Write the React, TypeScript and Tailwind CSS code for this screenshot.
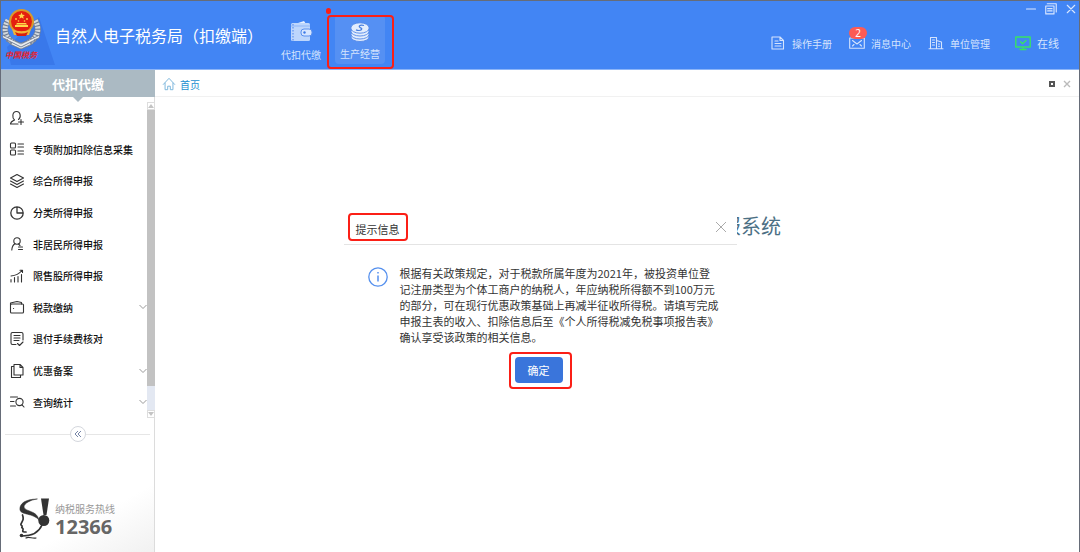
import type { ReactNode } from "react";

function Icon({ children, className = "", label }: { children: ReactNode; className?: string; label?: string }) {
  return (
    <svg
      viewBox="0 0 16 16"
      fill="none"
      stroke="currentColor"
      strokeWidth="1.1"
      strokeLinecap="round"
      strokeLinejoin="round"
      aria-hidden={label ? undefined : true}
      aria-label={label}
      className={`shrink-0 ${className}`}
    >
      {children}
    </svg>
  );
}

function Emblem() {
  return (
    <svg viewBox="0 0 56 60" className="h-[60px] w-14 shrink-0" role="img" aria-label="中国税务">
      <path d="M38 10 L54 58 H10 L6 40Z" fill="#3978ea" />
      <path d="M7 13 C1 23 4 34 20 39 C37 34 40 23 34 13" fill="none" stroke="#6f7d93" strokeWidth="6" />
      <path d="M7 13 C1 23 4 34 20 39 C37 34 40 23 34 13" fill="none" stroke="#d3d8dc" strokeWidth="5" strokeDasharray="2 1.2" />
      <path d="M1 28 L20 37 L39 28 L38 31 L33 33 L35 34 L29 36 L31 37 L20 42 L9 37 L11 36 L5 34 L7 33 L2 31Z" fill="#e9ecef" stroke="#67748c" strokeWidth=".7" />
      <path d="M6 33 L20 40 L34 33" fill="none" stroke="#67748c" strokeWidth=".9" />
      <circle cx="20.500" cy="14.500" r="12.500" fill="#d99a2b" />
      <circle cx="20.500" cy="14.500" r="10.500" fill="#e5200f" />
      <path d="M20.500 5.500l1 2.200 2.400.2-1.800 1.600.6 2.300-2.200-1.300-2.100 1.300.6-2.300-1.800-1.600 2.400-.2z" fill="#ffd94a" />
      <g fill="#ffd94a">
        <circle cx="15" cy="12" r=".9" />
        <circle cx="26" cy="12" r=".9" />
        <circle cx="17.500" cy="14" r=".8" />
        <circle cx="23.500" cy="14" r=".8" />
        <path d="M14 18 H27 V20 H14Z M16 16 H25 L26 17.500 H15Z" />
      </g>
      <path d="M11 22 C16 25 25 25 30 22 L28 28 H13Z" fill="#efb53a" />
      <path d="M14 25 Q20.500 28 27 25 L25 29 H16Z" fill="#d71e10" />
      <text x="4" y="51" fontSize="8" fontWeight="700" fontStyle="italic" fill="#e8222a" fontFamily="'Noto Sans CJK SC', sans-serif">
        中国税务
      </text>
    </svg>
  );
}

function WalletIcon() {
  return (
    <svg viewBox="0 0 24 22" className="h-[22px] w-6" aria-hidden>
      <path d="M6 3 L15 0 L17 3Z" fill="#e8f1ff" />
      <rect x="2" y="2" width="19" height="18" rx="1.500" fill="#bdd6fc" />
      <path d="M2 5 H21" stroke="#8db5f8" />
      <path d="M4 3 V20" stroke="#6f9ff2" strokeWidth="1.500" strokeDasharray="1.500 1.500" />
      <rect x="12" y="8" width="11" height="7" rx="3" fill="#d7e6ff" stroke="#5a90ee" />
      <circle cx="15.500" cy="11.500" r="1.200" fill="#3c7ae6" />
    </svg>
  );
}

function CoinsIcon() {
  return (
    <svg viewBox="0 0 20 20" className="h-5 w-5" aria-hidden>
      <g fill="#e3edfd" stroke="#5187e6" strokeWidth=".9">
        <ellipse cx="10" cy="15" rx="9" ry="4.500" />
        <ellipse cx="10" cy="12.500" rx="9" ry="4.500" />
        <ellipse cx="10" cy="9.500" rx="9" ry="4.500" />
        <ellipse cx="10" cy="6" rx="9.200" ry="5.200" />
      </g>
      <path d="M14 3.500 C11 2.500 8.500 3.500 9.500 5 C10 6 12.500 6 11.500 7.500 C10.500 8.800 7.500 8.500 6 7.800" fill="none" stroke="#4a80df" strokeWidth="1.300" />
    </svg>
  );
}

function HotlineLogo() {
  return (
    <svg viewBox="0 0 32 42" className="h-[42px] w-8 shrink-0" aria-hidden fill="none" stroke="#333" strokeLinecap="round">
      <path d="M18 1 C6 1 0 6 1 12 C2 17 14 15 20 22 C18 12 6 14 5 9 C5 5 12 2 18 1Z" fill="#333" strokeWidth=".5" />
      <path d="M22 .5 H30 L27.500 17 H24.500Z" fill="#333" stroke="none" />
      <circle cx="24.800" cy="22.500" r="5.500" fill="#333" stroke="none" />
      <path d="M23 27 C20 34 14 38 3 38" strokeWidth="1.700" />
      <circle cx="2.500" cy="37.500" r="1.800" fill="#333" stroke="none" />
      <path d="M3.500 17 C5 21 4 22 2 26 C1 28 4 27 3 29 C2 30 5 30 4 32 C3 34 5 34 7 34" strokeWidth="1.700" />
      <path d="M7 40 C10 38 13 41 17 40" strokeWidth="1.200" />
    </svg>
  );
}

const menu: { label: string; more?: boolean; icon: ReactNode }[] = [
  {
    label: "人员信息采集",
    icon: (
      <>
        <path d="M5.500 10 C3 8 3 1.500 7.500 1.500 S12 8 9.500 9.500 M5.500 10 C3.500 11 1.500 11.500 1.500 14 H9" />
        <path d="M12 9.500 V14.500 M9.500 12 H14.500" />
      </>
    ),
  },
  {
    label: "专项附加扣除信息采集",
    icon: (
      <>
        <rect x="1.500" y="2" width="5" height="5" rx="1" />
        <rect x="1.500" y="9" width="5" height="5" rx="1" />
        <path d="M9 3 H14.500 M9 6 H14.500 M9 10 H14.500 M9 13 H14.500" />
      </>
    ),
  },
  {
    label: "综合所得申报",
    icon: <path d="M8 1.500 L14.500 5 L8 8.500 L1.500 5Z M1.500 8 L8 11.500 L14.500 8 M1.500 11 L8 14.500 L14.500 11" />,
  },
  {
    label: "分类所得申报",
    icon: <path strokeWidth="1.300" d="M8 1.800 A6.200 6.200 0 1 0 14.200 8 H8Z M8 1.800 A6.200 6.200 0 0 1 14.200 8" />,
  },
  {
    label: "非居民所得申报",
    icon: (
      <>
        <circle cx="8" cy="5" r="3.200" />
        <path d="M6 7.800 C4 9 3 11 2.800 14 M9.500 8 L11 9.500 M9.500 11 H13.500 M9.500 13.500 H13.500" />
      </>
    ),
  },
  {
    label: "限售股所得申报",
    icon: <path d="M2 14 V11.500 M5.500 14 V9.500 M9 14 V8.500 M12.500 14 V6.500 M2 8 C7 7.500 10 6 13 2.500 M11 2.200 H13.500 V4.500" />,
  },
  {
    label: "税款缴纳",
    more: true,
    icon: (
      <>
        <rect x="1.500" y="5" width="13" height="9" rx="1" />
        <path d="M1.500 6 V4 L8 2.500 L12.500 3.500 V5 M4.500 9.500 H4.600" />
      </>
    ),
  },
  {
    label: "退付手续费核对",
    icon: <path d="M7 13.500 H3.500 Q2 13.500 2 12 V3 Q2 1.500 3.500 1.500 H12.500 Q14 1.500 14 3 V9 M5 4.500 H11 M5 7 H11 M5 9.500 H10 M8.500 12.500 L10.500 14.500 L14 11" />,
  },
  {
    label: "优惠备案",
    more: true,
    icon: <path d="M5 1.500 H11 L14 4.500 V12 H5Z M5 3.500 H2.500 V14.500 H11.500 V12 M11 1.500 V4.500 H14" />,
  },
  {
    label: "查询统计",
    more: true,
    icon: (
      <>
        <circle cx="10.500" cy="8" r="3.600" />
        <path d="M1.500 3 H8.500 M1.500 7.500 H5 M1.500 12 H6.500 M13 10.800 L15 13" />
      </>
    ),
  },
];

function Sidebar() {
  return (
    <aside className="flex w-[154px] shrink-0 flex-col border-r border-[#dcdcdc]">
      <h2 className="relative -mr-px flex h-[27px] items-center justify-center bg-[#abbac3] text-[13px] font-bold text-white">
        代扣代缴
        <svg viewBox="0 0 12 6" className="absolute top-full left-1/2 h-[5px] w-3 -translate-x-1/2" aria-hidden>
          <path d="M0 0 H12 L6 6Z" fill="#abbac3" />
        </svg>
      </h2>
      <div className="mt-[5px] -mr-px flex">
        <ul className="grid h-[316px] flex-1 auto-rows-fr">
          {menu.map((item) => (
            <li key={item.label} className="flex">
              <button className="flex flex-1 items-center gap-2 pl-2 text-left text-[10px] font-medium text-[#111]">
                <Icon className="h-4 w-4 text-[#333]">{item.icon}</Icon>
                <span className="flex-1 whitespace-nowrap">{item.label}</span>
                {item.more && (
                  <svg viewBox="0 0 8 8" className="h-2 w-2 shrink-0" fill="none" stroke="#999" aria-hidden>
                    <path d="M.5 2 L4 5.500 L7.500 2" />
                  </svg>
                )}
              </button>
            </li>
          ))}
        </ul>
        <div className="flex w-2 flex-col bg-[#e3e8f2]" aria-hidden>
          <span className="flex h-2 items-center justify-center border border-[#ddd] bg-white">
            <svg viewBox="0 0 6 4" className="h-1 w-1.5">
              <path d="M0 4 L3 0 L6 4Z" fill="#c4c4c4" />
            </svg>
          </span>
          <span className="h-[276px] bg-[#c2c2c2]" />
          <span className="mt-auto flex h-2 items-center justify-center border border-[#ddd] bg-white">
            <svg viewBox="0 0 6 4" className="h-1 w-1.5">
              <path d="M0 0 L3 4 L6 0Z" fill="#c4c4c4" />
            </svg>
          </span>
        </div>
      </div>
      <div className="mt-2 flex items-center px-1">
        <span className="h-px flex-1 bg-[#e6e6e6]" />
        <button aria-label="收起" className="flex h-4 w-4 items-center justify-center rounded-full border border-[#d4d7dd]">
          <svg viewBox="0 0 8 8" className="h-2 w-2" fill="none" stroke="#7685a8" aria-hidden>
            <path d="M4 1 L1 4 L4 7 M7 1 L4 4 L7 7" />
          </svg>
        </button>
        <span className="h-px flex-1 bg-[#e6e6e6]" />
      </div>
      <div className="mt-auto flex items-center gap-1 bg-linear-to-br from-white from-60% to-[#f1f1f1] pt-8 pb-3 pl-[18px]">
        <HotlineLogo />
        <div>
          <p className="text-[10px] leading-4 text-[#999]">纳税服务热线</p>
          <p className="font-['Noto_Sans'] text-xl leading-5 font-bold text-[#666]">12366</p>
        </div>
      </div>
    </aside>
  );
}

function Header() {
  return (
    <header className="relative flex h-[69px] shrink-0 border-b border-[#8cb5f8] bg-[#4285f4] text-white">
      <div className="flex items-center pt-1">
        <Emblem />
        <h1 className="-ml-0.5 pb-1 text-base whitespace-nowrap">自然人电子税务局（扣缴端）</h1>
      </div>
      <nav className="ml-[13px] flex gap-[9px] text-[10px] text-[#d5e4fd]">
        <button className="flex w-[50px] flex-col items-center justify-end gap-1 pb-1.5">
          <WalletIcon />
          <span className="leading-4">代扣代缴</span>
        </button>
        <div className="relative pt-[14px]">
          <button className="flex h-[49px] w-[50px] flex-col items-center justify-end gap-1 rounded bg-[#5590f3] pb-0.5">
            <CoinsIcon />
            <span className="leading-4">生产经营</span>
          </button>
          <span className="absolute top-[14px] -left-2 h-[54px] w-[67px] rounded-sm border-2 border-[#fb1f16]" />
          <span className="absolute top-[7px] -left-[9px] h-[6px] w-[5px] rounded-full bg-[#fb1f16]" />
        </div>
      </nav>
      <nav className="mt-[34px] mr-5 ml-auto flex h-4 items-center gap-[17px] text-[10px] whitespace-nowrap text-[#d5e4fd]">
        <a href="#manual" className="flex items-center gap-1.5">
          <Icon className="h-4 w-4">
            <path d="M2 2 H10 L13.500 5.500 V14 H2Z M10 2 V5.500 H13.500 M5 6 H8 M5 8.500 H11 M5 11 H11" />
          </Icon>
          操作手册
        </a>
        <a href="#messages" className="relative flex items-center gap-1.5">
          <Icon className="h-4 w-4">
            <path d="M.700 3 H15.300 V13.300 H.700Z M3.500 5.500 L8 9 L12.500 5.500 M3.500 11 L5 9.500 M12.500 11 L11 9.500" />
          </Icon>
          消息中心
          <span className="absolute -top-2 left-0 flex h-3 w-[18px] items-center justify-center rounded-full bg-[#fc5b55] font-['Noto_Sans'] text-[10px] text-white">
            2
          </span>
        </a>
        <a href="#unit" className="flex items-center gap-1.5">
          <Icon className="h-4 w-4">
            <path d="M2.500 13.500 V2.500 H8.500 V13.500 M8.500 5.500 L13.500 7 V13.500 M1 13.700 H15 M4.500 5 H6.500 M4.500 7.500 H6.500 M4.500 10 H6.500 M10.500 9 H11.500 M10.500 11.300 H11.500" />
          </Icon>
          单位管理
        </a>
        <span className="ml-2 flex items-center gap-1.5 text-[11px]">
          <Icon className="h-4 w-4 text-[#38e264]">
            <path strokeWidth="1.400" d="M.800 2 H15.200 V12 H.800Z M5.500 6.800 L7.500 8.800 L11 5.500 M8 12 V14 M5 14.500 H11" />
          </Icon>
          在线
        </span>
      </nav>
      <div className="absolute top-0.5 right-0.5 flex gap-2 text-[#d9e7ff]">
        <button aria-label="最小化" className="h-3 w-3">
          <Icon className="h-3 w-3">
            <path d="M2 8 H14" strokeWidth="1.500" />
          </Icon>
        </button>
        <button aria-label="还原" className="h-3 w-3">
          <Icon className="h-3 w-3">
            <path strokeWidth="1.500" d="M1 4 H12 V14.500 H1Z M3 1 H15 V12 M3.500 7.500 H9.500 M3.500 10.500 H9.500" />
          </Icon>
        </button>
        <button aria-label="关闭" className="h-3 w-3">
          <Icon className="h-3 w-3">
            <path d="M3 3 L13 13 M13 3 L3 13" strokeWidth="1.500" />
          </Icon>
        </button>
      </div>
    </header>
  );
}

function Dialog() {
  return (
    <section role="dialog" aria-labelledby="dialog-title" className="flex w-[393px] flex-col bg-white pb-1 text-[11px] text-[#333]">
      <div className="flex h-[33px] items-center justify-between border-b border-[#e4e4e4] pr-2.5 pb-0.5 pl-1">
        <h2 id="dialog-title" className="flex h-7 items-center rounded-sm border-2 border-[#fb1f16] px-1.5 pt-1">
          提示信息
        </h2>
        <button aria-label="关闭">
          <svg viewBox="0 0 12 12" className="h-3 w-3" stroke="#aaa" aria-hidden>
            <path d="M1 1 L11 11 M11 1 L1 11" />
          </svg>
        </button>
      </div>
      <div className="flex gap-3 pt-5 pl-6">
        <svg viewBox="0 0 20 20" className="mt-0.5 h-5 w-5 shrink-0" fill="none" stroke="#5590ee" aria-hidden>
          <circle cx="10" cy="10" r="9.200" strokeWidth="1.300" />
          <path d="M10 8.500 V14.500 M10 5 V6.500" strokeWidth="1.500" />
        </svg>
        <p className="leading-4 whitespace-nowrap">
          根据有关政策规定，对于税款所属年度为2021年，被投资单位登
          <br />
          记注册类型为个体工商户的纳税人，年应纳税所得额不到100万元
          <br />
          的部分，可在现行优惠政策基础上再减半征收所得税。请填写完成
          <br />
          申报主表的收入、扣除信息后至《个人所得税减免税事项报告表》
          <br />
          确认享受该政策的相关信息。
        </p>
      </div>
      <div className="mt-[7px] self-center rounded-sm border-2 border-[#fb1f16] pt-[3px] pr-[7px] pb-1 pl-1">
        <button className="flex h-[26px] w-12 items-center justify-center rounded bg-[#3a75db] text-white">确定</button>
      </div>
    </section>
  );
}

export default function App() {
  return (
    <div className="relative flex min-h-screen flex-col border-x border-t border-[#666c78] bg-white font-['Noto_Sans_CJK_SC',sans-serif]">
      <Header />
      <div className="flex flex-1">
        <Sidebar />
        <main className="flex flex-1 flex-col">
          <div className="flex h-[27px] items-center border-b border-[#f1f1f1] pr-2 pl-[7px]">
            <a href="#home" className="flex items-center gap-1 pt-0.5 text-[10px] text-[#1c8fd0]">
              <Icon className="h-3.5 w-3.5 text-[#7ab5dc]">
                <path d="M1.500 8.500 L8 1.500 L14.500 8.500 M3.500 7 V14.500 H6.500 V10.500 H9.500 V14.500 H12.500 V7" />
              </Icon>
              首页
            </a>
            <div className="ml-auto flex items-center gap-2 pt-0.5">
              <button aria-label="最大化" className="h-1.5 w-1.5 border-2 border-[#555]" />
              <button aria-label="关闭标签">
                <svg viewBox="0 0 8 8" className="h-2 w-2" stroke="#bbb" strokeWidth="1.400" aria-hidden>
                  <path d="M1 1 L7 7 M7 1 L1 7" />
                </svg>
              </button>
            </div>
          </div>
          <p className="pt-[115px] pl-[268px] text-center text-xl text-[#4c6f84]">报系统</p>
        </main>
      </div>
      <div className="absolute inset-x-0 top-[211px] flex justify-center">
        <Dialog />
      </div>
    </div>
  );
}
